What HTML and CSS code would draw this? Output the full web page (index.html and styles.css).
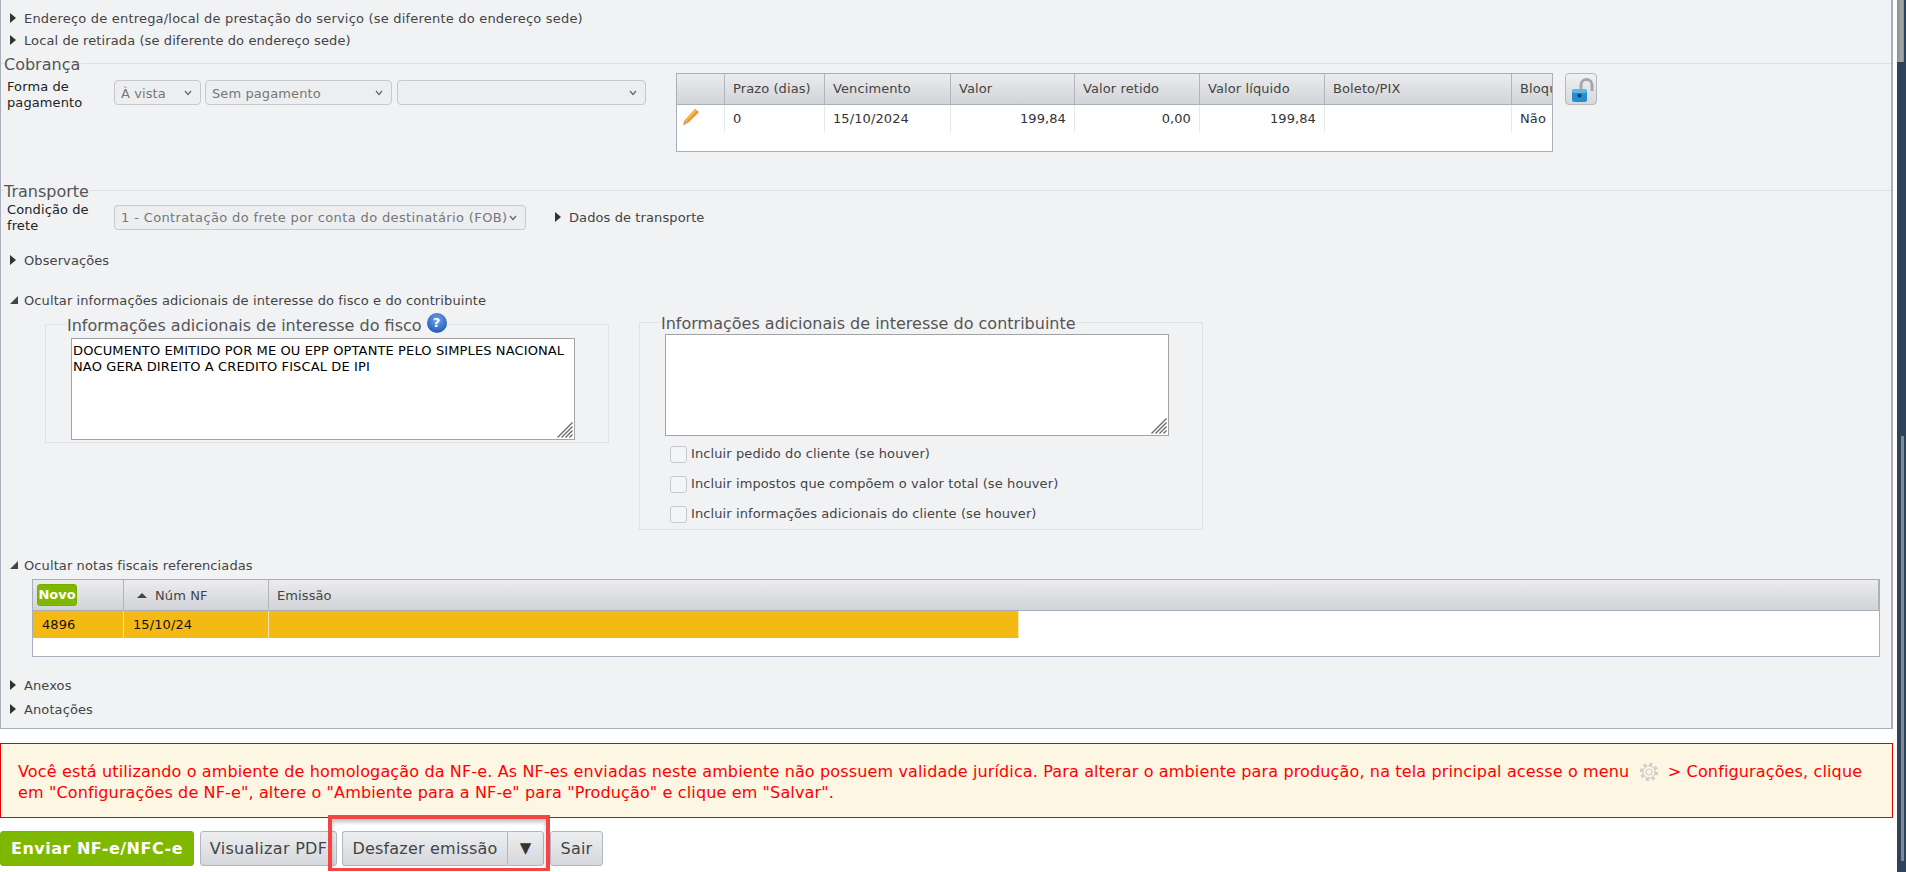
FILE: index.html
```html
<!DOCTYPE html>
<html lang="pt-BR">
<head>
<meta charset="utf-8">
<title>NF-e</title>
<link rel="stylesheet" href="styles.css">
</head>
<body>
<div class="layout">
  <main class="main">
    <section class="panel">
      <div class="toggle toggle-wide"><svg class="tri" viewBox="0 0 6 10"><polygon points="0,0 6,5 0,10"/></svg>Endereço de entrega/local de prestação do serviço (se diferente do endereço sede)</div>
      <div class="toggle"><svg class="tri" viewBox="0 0 6 10"><polygon points="0,0 6,5 0,10"/></svg>Local de retirada (se diferente do endereço sede)</div>

      <fieldset class="group group-first">
        <legend>Cobrança</legend>
        <div class="billing">
          <div class="form-label">Forma de pagamento</div>
          <select class="sel sel-a" disabled><option>À vista</option></select>
          <select class="sel sel-b" disabled><option>Sem pagamento</option></select>
          <select class="sel sel-c" disabled><option></option></select>
          <div class="grid grid-pay">
            <table>
              <colgroup><col class="c1"><col class="c2"><col class="c3"><col class="c4"><col class="c5"><col class="c6"><col class="c7"><col class="c8"></colgroup>
              <thead><tr><th></th><th>Prazo (dias)</th><th>Vencimento</th><th>Valor</th><th>Valor retido</th><th>Valor líquido</th><th>Boleto/PIX</th><th>Bloqueado</th></tr></thead>
              <tbody><tr>
                <td class="edit"><svg class="pencil" width="18" height="18" viewBox="0 0 18 18"><polygon points="13,1 17,4 6,15 2,13" fill="#f0922a"/><polygon points="13,1 15,2.5 4,14 2,13" fill="#f7b35c"/><polygon points="2,13 6,15 1,17.500" fill="#c9a27a"/></svg></td>
                <td>0</td><td>15/10/2024</td><td class="num">199,84</td><td class="num">0,00</td><td class="num">199,84</td><td></td><td>Não</td>
              </tr></tbody>
            </table>
          </div>
          <button class="lock-btn" type="button" aria-label="Desbloquear">
            <svg width="24" height="26" viewBox="0 0 24 26"><path d="M11 11V7a5.500 5.500 0 0 1 11 0v6" fill="none" stroke="#a5a8ab" stroke-width="3"/><rect x="2" y="11" width="15" height="13" rx="2.500" fill="#1f8fd0"/><rect x="2" y="11" width="15" height="4" rx="2" fill="#5db8e8"/><circle cx="9.500" cy="17.500" r="2" fill="#123f66"/></svg>
          </button>
        </div>
      </fieldset>

      <fieldset class="group">
        <legend>Transporte</legend>
        <div class="shipping">
          <div class="form-label">Condição de frete</div>
          <select class="sel sel-frete" disabled><option>1 - Contratação do frete por conta do destinatário (FOB)</option></select>
          <div class="toggle toggle-inline"><svg class="tri" viewBox="0 0 6 10"><polygon points="0,0 6,5 0,10"/></svg>Dados de transporte</div>
        </div>
      </fieldset>

      <div class="toggle"><svg class="tri" viewBox="0 0 6 10"><polygon points="0,0 6,5 0,10"/></svg>Observações</div>
      <div class="toggle toggle-info"><svg class="tri-open" viewBox="0 0 8 8"><polygon points="8,0 8,8 0,8"/></svg>Ocultar informações adicionais de interesse do fisco e do contribuinte</div>

      <div class="info-row">
        <fieldset class="info info-fisco">
          <legend><span class="legend-text">Informações adicionais de interesse do fisco</span> <span class="help">?</span></legend>
          <div class="ta-wrap">
            <textarea class="ta" readonly>DOCUMENTO EMITIDO POR ME OU EPP OPTANTE PELO SIMPLES NACIONAL
NAO GERA DIREITO A CREDITO FISCAL DE IPI</textarea>
            <svg class="grip" width="16" height="16" viewBox="0 0 16 16"><path d="M15.500 0.500 0.500 15.500M15.500 4.500 4.500 15.500M15.500 8.500 8.500 15.500M15.500 12.500 12.500 15.500" stroke="#666" stroke-width="1.300" fill="none"/></svg>
          </div>
        </fieldset>
        <fieldset class="info info-contrib">
          <legend><span class="legend-text">Informações adicionais de interesse do contribuinte</span></legend>
          <div class="ta-wrap">
            <textarea class="ta" readonly></textarea>
            <svg class="grip" width="16" height="16" viewBox="0 0 16 16"><path d="M15.500 0.500 0.500 15.500M15.500 4.500 4.500 15.500M15.500 8.500 8.500 15.500M15.500 12.500 12.500 15.500" stroke="#666" stroke-width="1.300" fill="none"/></svg>
          </div>
          <label class="check"><input type="checkbox">Incluir pedido do cliente (se houver)</label>
          <label class="check"><input type="checkbox">Incluir impostos que compõem o valor total (se houver)</label>
          <label class="check"><input type="checkbox">Incluir informações adicionais do cliente (se houver)</label>
        </fieldset>
      </div>

      <div class="toggle toggle-refs"><svg class="tri-open" viewBox="0 0 8 8"><polygon points="8,0 8,8 0,8"/></svg>Ocultar notas fiscais referenciadas</div>
      <div class="grid grid-refs">
        <table>
          <colgroup><col class="r1"><col class="r2"><col class="r3"><col></colgroup>
          <thead><tr>
            <th><button class="novo" type="button">Novo</button></th>
            <th><span class="sort"></span>Núm NF</th>
            <th colspan="2">Emissão</th>
          </tr></thead>
          <tbody><tr class="selected"><td>4896</td><td>15/10/24</td><td></td><td class="blank"></td></tr></tbody>
        </table>
      </div>

      <div class="toggle toggle-anexos"><svg class="tri" viewBox="0 0 6 10"><polygon points="0,0 6,5 0,10"/></svg>Anexos</div>
      <div class="toggle toggle-anot"><svg class="tri" viewBox="0 0 6 10"><polygon points="0,0 6,5 0,10"/></svg>Anotações</div>
    </section>

    <div class="alert">Você está utilizando o ambiente de homologação da NF-e. As NF-es enviadas neste ambiente não possuem validade jurídica. Para alterar o ambiente para produção, na tela principal acesse o menu <svg class="gear" width="20" height="20" viewBox="0 0 20 20"><circle cx="10" cy="10" r="7.500" fill="none" stroke="#cfcfcf" stroke-width="3.500" stroke-dasharray="3 2.900"/><circle cx="10" cy="10" r="6.200" fill="#fdf6e3" stroke="#c4c4c4" stroke-width="1"/><circle cx="10" cy="10" r="3" fill="none" stroke="#d0d0d0" stroke-width="1.200"/></svg> &gt; Configurações, clique<br>em "Configurações de NF-e", altere o "Ambiente para a NF-e" para "Produção" e clique em "Salvar".</div>

    <div class="actions">
      <button class="btn btn-primary" type="button">Enviar NF-e/NFC-e</button>
      <button class="btn btn-pdf" type="button">Visualizar PDF</button>
      <div class="split-wrap">
        <div class="split">
          <button class="btn split-main" type="button">Desfazer emissão</button>
          <button class="btn split-caret" type="button">▼</button>
        </div>
        <span class="highlight"></span>
      </div>
      <button class="btn btn-exit" type="button">Sair</button>
    </div>
  </main>
  <aside class="rail">
    <span class="rail-top"></span>
    <span class="rail-thumb"></span>
  </aside>
</div>
</body>
</html>
```
FILE: styles.css
```css
* { box-sizing: border-box; }
html, body { margin: 0; height: 872px; overflow: hidden; background: #fff; }
body { font: 13px/16px "DejaVu Sans", Verdana, sans-serif; letter-spacing: .1px; color: #444; }
.layout { display: flex; height: 872px; }
.main { width: 1897px; flex: none; }
.rail { width: 9px; flex: none; background: #2e4359; position: relative; }
.rail-top { position: absolute; left: 0; top: 0; width: 7px; height: 62px; background: linear-gradient(90deg, #8f8f8f, #a8a8a8 70%, #8a8a8a); }
.rail-thumb { position: absolute; left: 4px; top: 436px; width: 3px; height: 425px; background: #7f8a94; }

.panel { width: 1893px; border: 1px solid #a8afba; border-top: 0; border-right-width: 2px; background: #f1f2f4; padding: 8px 0 7px; }
.toggle { height: 22px; display: flex; align-items: center; padding-left: 9px; color: #444; white-space: nowrap; }
.toggle-wide { letter-spacing: .2px; }
.tri { width: 6px; height: 10px; margin-right: 8px; fill: #333; flex: none; position: relative; top: -1px; }
.tri-open { width: 8px; height: 8px; margin-right: 6px; fill: #444; flex: none; position: relative; top: -1px; }
.toggle-inline { padding-left: 0; margin-left: 30px; height: 25px; }
.toggle-info { margin-top: 18px; }
.toggle-refs { margin-top: 25px; }
.toggle-anexos { margin-top: 18px; }
.toggle-anot { margin-top: 2px; }

.group { margin: 0; padding: 0; border: 0; border-top: 1px solid #dcdfe3; min-width: 0; }
.group-first { margin-top: 2px; }
.group legend, .info legend { padding: 0 1px 0 0; font-size: 16px; line-height: 19px; letter-spacing: 0; color: #555; }
.group legend { margin-left: 3px; position: relative; top: 1px; }
.legend-text { position: relative; top: 1px; }
.form-label { width: 107px; margin-left: 6px; color: #222; flex: none; }

.billing { display: flex; align-items: flex-start; height: 108px; }
.billing .form-label { margin-top: 6px; }
.sel { appearance: none; height: 25px; margin-top: 7px; font: 13px "DejaVu Sans", Verdana, sans-serif; letter-spacing: .1px; color: #777; background: #eceef0 url("data:image/svg+xml,%3Csvg xmlns='http://www.w3.org/2000/svg' width='8' height='6'%3E%3Cpath d='M1 1l3 3.500 3-3.500' fill='none' stroke='%23666' stroke-width='1.200'/%3E%3C/svg%3E") no-repeat right 8px center; border: 1px solid #c4c8cf; border-radius: 4px; padding: 2px 18px 0 6px; opacity: 1; flex: none; }
.sel-a { width: 87px; }
.sel-b { width: 187px; margin-left: 4px; }
.sel-c { width: 249px; margin-left: 5px; }
.sel-frete { width: 412px; margin-top: 3px; padding-top: 0; letter-spacing: .37px; }

.shipping { display: flex; align-items: flex-start; height: 50px; padding-top: 2px; }
.shipping .toggle-inline { margin: 3px 0 0 29px; }

.grid { border: 1px solid #a8afba; background: #fff; overflow: hidden; flex: none; }
.grid table { border-collapse: separate; border-spacing: 0; table-layout: fixed; }
.grid th { height: 31px; padding: 0 8px; font-weight: normal; text-align: left; color: #444; white-space: nowrap; background: linear-gradient(#ebecee, #d1d3d7); border-right: 1px solid #b0b5bd; border-bottom: 1px solid #a8afba; overflow: hidden; }
.grid td { height: 27px; padding: 0 8px; color: #333; white-space: nowrap; border-right: 1px solid #e6e7e9; }
.grid .num { text-align: right; }
.grid-pay { width: 877px; height: 79px; margin-left: 30px; }
.grid-pay table { width: 976px; }
.c1 { width: 48px; } .c2 { width: 100px; } .c3 { width: 126px; } .c4 { width: 124px; }
.c5 { width: 125px; } .c6 { width: 125px; } .c7 { width: 187px; } .c8 { width: 141px; }
.grid td.edit { padding: 0 0 0 5px; }
.pencil { display: block; margin-top: -4px; }
.lock-btn { width: 32px; height: 32px; margin-left: 12px; padding: 3px 0 0 4px; border: 1px solid #b4b8bf; border-radius: 4px; background: linear-gradient(#f0f1f3, #d6d8dc); flex: none; }
.lock-btn svg { display: block; }

.info-row { display: flex; align-items: flex-start; gap: 30px; margin-left: 44px; }
.info { width: 564px; margin: 0; border: 1px solid #dfe2e6; padding: 0 0 0 25px; min-width: 0; }
.info legend { margin-left: -4px; white-space: nowrap; }
.info-fisco { margin-top: 2px; padding-top: 4px; padding-bottom: 2px; }
.info-fisco legend { height: 20px; display: flex; align-items: center; }
.info-contrib { margin-top: 1px; padding-top: 2px; padding-bottom: 7px; }
.help { width: 20px; height: 20px; margin-left: 5px; border-radius: 50%; position: relative; top: -1px; background: radial-gradient(circle at 50% 35%, #6fa6ea, #2a63bd 70%, #1c4c9c); color: #fff; font: bold 13px/20px "DejaVu Sans", sans-serif; text-align: center; }
.ta-wrap { position: relative; width: 504px; height: 102px; }
.ta { display: block; width: 504px; height: 102px; resize: none; margin: 0; padding: 4px 1px; border: 1px solid #a3a3a3; border-radius: 0; background: #fff; color: #000; font: 13px/16px "DejaVu Sans", Verdana, sans-serif; letter-spacing: .12px; overflow: hidden; outline: 0; }
.grip { position: absolute; right: 2px; bottom: 2px; }
.check { display: flex; align-items: center; height: 16px; margin-top: 14px; margin-left: 5px; color: #444; white-space: nowrap; }
.ta-wrap + .check { margin-top: 10px; }
.check input { appearance: none; width: 17px; height: 17px; margin: 0 4px 0 0; border: 1px solid #c6c9ce; border-radius: 3px; background: #f4f5f6; flex: none; }

.grid-refs { width: 1848px; height: 78px; margin: 2px 0 0 31px; }
.grid-refs table { width: 100%; }
.r1 { width: 91px; } .r2 { width: 145px; } .r3 { width: 750px; }
.grid-refs th { padding-top: 1px; }
.grid-refs th:first-child { padding: 0 0 0 4px; }
.novo { display: block; width: 40px; height: 22px; padding: 0; border: 1px solid #79ad00; border-radius: 3px; background: #7fb800; color: #fff; font: bold 13px/20px "DejaVu Sans", sans-serif; letter-spacing: 0; text-align: center; }
.sort { display: inline-block; margin: 0 8px 2px 5px; border: 5px solid transparent; border-top: 0; border-bottom: 5px solid #444; vertical-align: middle; }
.selected td { background: #f5b914; color: #111; border-right: 1px solid #fbe7ad; }
.grid-refs td { height: 27px; padding: 0 9px; }
.grid-refs td.blank { background: #fff; border: 0; }

.alert { width: 1893px; height: 75px; margin-top: 14px; padding: 17px 17px 0; border: 1px solid #e60000; background: #fdf6e3; color: #f00; font-size: 16px; line-height: 21px; letter-spacing: .14px; white-space: nowrap; }
.gear { vertical-align: -5px; margin: 0 4px; }

.actions { display: flex; align-items: flex-start; margin-top: 13px; }
.btn { height: 35px; padding: 0 9px; border: 1px solid #b2b6bd; border-radius: 3px; background: linear-gradient(#eceef0, #d5d7db); color: #444; font: 16px/33px "DejaVu Sans", Verdana, sans-serif; letter-spacing: .2px; white-space: nowrap; }
.btn-primary { width: 194px; padding: 0; border-color: #7db300; background: #7fb800; color: #fff; font-weight: bold; letter-spacing: .5px; }
.btn-pdf { width: 137px; margin-left: 6px; padding: 0; letter-spacing: .3px; }
.split-wrap { position: relative; margin-left: 5px; }
.split { display: flex; width: 202px; }
.split-main { width: 165px; border-radius: 3px 0 0 3px; border-right: 0; padding: 0; }
.split-caret { width: 37px; border-radius: 0 3px 3px 0; padding: 0; font-size: 15px; color: #333; }
.highlight { position: absolute; top: -16px; left: -14px; right: -6px; bottom: -5px; border: 4px solid #f44545; border-bottom-width: 3px; box-shadow: inset 0 3px 4px rgba(0,0,0,.25); }
.btn-exit { width: 53px; margin-left: 6px; padding: 0; }
```
